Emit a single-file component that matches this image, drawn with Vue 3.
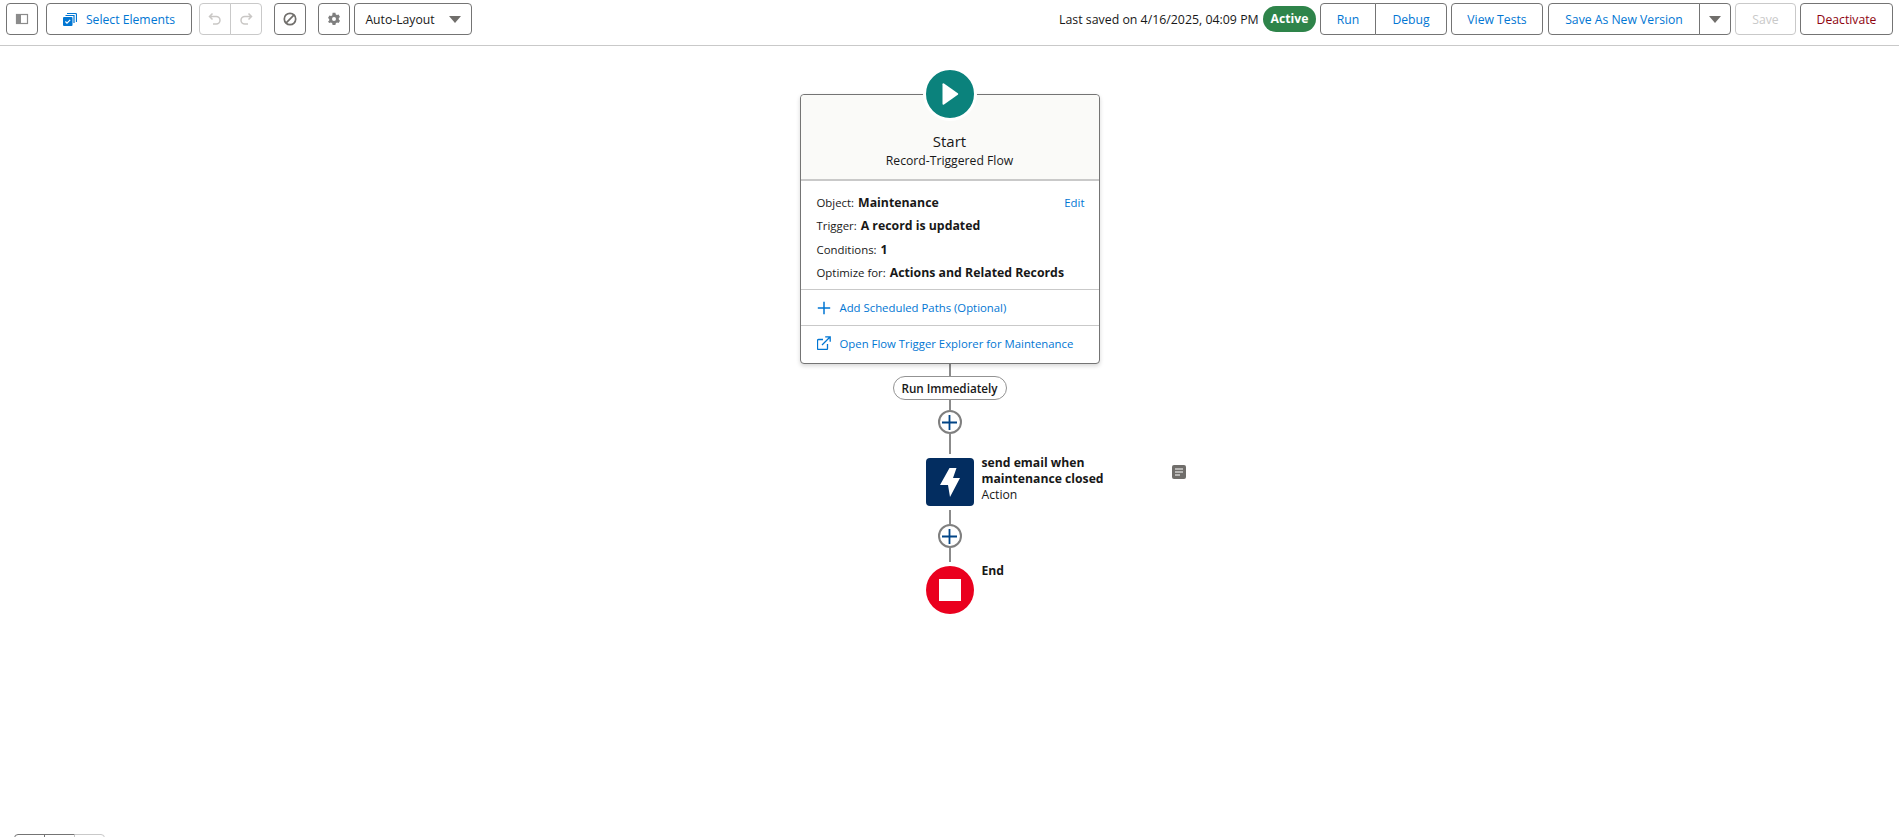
<template>
  <div class="builder">
    <header class="toolbar">
      <div class="tools">
        <button class="btn icon-btn panel-btn" title="Toggle Panel">
          <svg width="14" height="14" viewBox="0 0 14 14">
            <rect x="1.500" y="2.500" width="11" height="9" fill="none" stroke="#8b8b8b" stroke-width="1.200" />
            <rect x="1.500" y="2.500" width="4.500" height="9" fill="#8b8b8b" />
          </svg>
        </button>
        <button class="btn select-btn">
          <svg width="14" height="14" viewBox="0 0 14 14">
            <path d="M4 1.500h8.500a1 1 0 0 1 1 1V10" fill="none" stroke="#0176d3" stroke-width="1.200" />
            <path d="M2.500 3.500h8.500V11" fill="none" stroke="#0176d3" stroke-width="1.200" />
            <rect x="0" y="5" width="9.500" height="9" rx="1" fill="#0176d3" />
            <path d="M2.400 9.500l1.600 1.600 3.200-3.200" fill="none" stroke="#fff" stroke-width="1.200" />
          </svg>
          <span>Select Elements</span>
        </button>
        <div class="group undo-group">
          <button class="btn icon-btn disabled" title="Undo">
            <svg width="14" height="14" viewBox="0 0 14 14">
              <path d="M4.500 1.500L1.500 4.500l3 3M1.800 4.500h6.400a3.800 3.800 0 0 1 0 7.600H5" fill="none" stroke="#c9c7c5" stroke-width="1.500" />
            </svg>
          </button>
          <button class="btn icon-btn disabled" title="Redo">
            <svg width="14" height="14" viewBox="0 0 14 14">
              <path d="M9.500 1.500l3 3-3 3M12.200 4.500H5.800a3.800 3.800 0 0 0 0 7.600H9" fill="none" stroke="#c9c7c5" stroke-width="1.500" />
            </svg>
          </button>
        </div>
        <button class="btn icon-btn ban-btn" title="Errors">
          <svg width="14" height="14" viewBox="0 0 14 14">
            <circle cx="7" cy="7" r="5.700" fill="none" stroke="#706e6b" stroke-width="1.700" />
            <path d="M3.200 10.800l7.600-7.600" stroke="#706e6b" stroke-width="1.700" />
          </svg>
        </button>
        <button class="btn icon-btn gear-btn" title="Settings">
          <svg width="14" height="14" viewBox="0 0 14 14">
            <path fill-rule="evenodd" fill="#7f7f7f" d="M5.600.8h2.800l.4 1.600 1.200.7 1.600-.5 1.400 2.400-1.200 1.100v1.500l1.200 1.100-1.400 2.400-1.600-.5-1.200.7-.4 1.600H5.600l-.4-1.600-1.200-.7-1.600.5L1 9.700l1.200-1.100V7.100L1 6l1.400-2.400 1.600.5 1.200-.7zM7 5a2 2 0 1 0 0 4 2 2 0 0 0 0-4z" />
          </svg>
        </button>
        <button class="btn layout-btn">
          <span>Auto-Layout</span>
          <i class="caret"></i>
        </button>
      </div>

      <div class="actions">
        <span class="saved">Last saved on 4/16/2025, 04:09 PM</span>
        <span class="badge">Active</span>
        <div class="group run-group">
          <button class="btn run">Run</button>
          <button class="btn debug">Debug</button>
        </div>
        <button class="btn tests">View Tests</button>
        <div class="group save-group">
          <button class="btn save-as">Save As New Version</button>
          <button class="btn more"><i class="caret"></i></button>
        </div>
        <button class="btn save disabled">Save</button>
        <button class="btn deactivate">Deactivate</button>
      </div>
    </header>

    <main class="canvas">
      <section class="start-card">
        <div class="start-icon">
          <svg width="18" height="24" viewBox="0 0 18 24">
            <path d="M1.500 2.300v19.400a1 1 0 0 0 1.500.8l13.800-9.700a1 1 0 0 0 0-1.600L3 1.500a1 1 0 0 0-1.500.8z" fill="#fff" />
          </svg>
        </div>
        <div class="card-head">
          <div class="card-title">Start</div>
          <div class="card-sub">Record-Triggered Flow</div>
        </div>
        <div class="card-body">
          <a class="edit">Edit</a>
          <div v-for="row in details" :key="row.label" class="detail">
            <span>{{ row.label }}:</span> <b>{{ row.value }}</b>
          </div>
        </div>
        <a class="card-link">
          <svg width="14" height="14" viewBox="0 0 14 14">
            <path d="M7 .8v12.400M.8 7h12.400" stroke="#0176d3" stroke-width="1.500" />
          </svg>
          Add Scheduled Paths (Optional)
        </a>
        <a class="card-link">
          <svg width="14" height="14" viewBox="0 0 14 14">
            <path d="M10.500 8v4.500a1 1 0 0 1-1 1H1.500a1 1 0 0 1-1-1V4.500a1 1 0 0 1 1-1H6" fill="none" stroke="#0176d3" stroke-width="1.300" />
            <path d="M5 9l7.500-7.500M8.200.8h5v5" fill="none" stroke="#0176d3" stroke-width="1.300" />
          </svg>
          Open Flow Trigger Explorer for Maintenance
        </a>
      </section>

      <div class="line first"></div>
      <div class="pill">Run Immediately</div>
      <div class="line short"></div>
      <button class="add"><svg width="15" height="15" viewBox="0 0 15 15"><path d="M7.500 0v15M0 7.500h15" stroke="#014486" stroke-width="1.800" /></svg></button>
      <div class="line mid"></div>

      <div class="node action">
        <svg width="20" height="29" viewBox="0 0 20 29">
          <path d="M9.500 0H16.500L13 10H20L10 29L8 17H0Z" fill="#fff" />
        </svg>
        <div class="node-label">
          <b>send email when<br />maintenance closed</b>
          <span>Action</span>
        </div>
        <svg class="note" width="14" height="14" viewBox="0 0 14 14">
          <rect width="14" height="14" rx="2" fill="#706e6b" />
          <path d="M3 4h8M3 7h8M3 10h5" stroke="#fff" stroke-width="1.200" />
        </svg>
      </div>

      <div class="line after"></div>
      <button class="add"><svg width="15" height="15" viewBox="0 0 15 15"><path d="M7.500 0v15M0 7.500h15" stroke="#014486" stroke-width="1.800" /></svg></button>
      <div class="line end-line"></div>

      <div class="node end">
        <i class="stop"></i>
        <div class="node-label"><b>End</b></div>
      </div>
    </main>

    <div class="zoom-group">
      <i></i><i></i><i class="off"></i>
    </div>
  </div>
</template>

<script setup>
const details = [
  { label: 'Object', value: 'Maintenance' },
  { label: 'Trigger', value: 'A record is updated' },
  { label: 'Conditions', value: '1' },
  { label: 'Optimize for', value: 'Actions and Related Records' }
]
</script>

<style>
html,
body {
  margin: 0;
  background: #fff;
  overflow: hidden;
}
</style>

<style scoped>
.builder {
  position: relative;
  width: 1899px;
  height: 837px;
  overflow: hidden;
  font-family: 'Open Sans', 'Noto Sans', sans-serif;
  font-size: 12.200px;
  color: #181818;
}

/* toolbar */
.toolbar {
  display: flex;
  justify-content: space-between;
  align-items: center;
  box-sizing: border-box;
  height: 46px;
  padding: 0 6px 7px;
  border-bottom: 1px solid #c9c9c9;
}
.tools,
.actions,
.group {
  display: flex;
  align-items: center;
}
.btn {
  box-sizing: border-box;
  display: flex;
  align-items: center;
  justify-content: center;
  height: 32px;
  padding: 0;
  border: 1px solid #747474;
  border-radius: 4px;
  background: #fff;
  color: #0176d3;
  font: inherit;
}
.icon-btn {
  width: 32px;
}
.select-btn {
  width: 146px;
  margin-left: 8px;
  gap: 9px;
}
.undo-group {
  margin-left: 7px;
}
.ban-btn {
  margin-left: 12px;
}
.gear-btn {
  margin-left: 12px;
}
.layout-btn {
  width: 118px;
  margin-left: 4px;
  gap: 14px;
  color: #181818;
}
.caret {
  display: block;
  width: 0;
  height: 0;
  border-left: 6px solid transparent;
  border-right: 6px solid transparent;
  border-top: 7px solid #706e6b;
}
.group .btn:first-child {
  border-radius: 4px 0 0 4px;
}
.group .btn:last-child {
  margin-left: -1px;
  border-radius: 0 4px 4px 0;
}
.btn.disabled {
  border-color: #c9c9c9;
  color: #c9c9c9;
}
.saved {
  width: 204px;
  font-size: 12.350px;
  white-space: nowrap;
}
.badge {
  box-sizing: border-box;
  width: 53px;
  height: 26px;
  line-height: 25px;
  border-radius: 13px;
  background: #2e844a;
  color: #fff;
  font-weight: 700;
  text-align: center;
}
.run-group {
  margin-left: 4px;
}
.run {
  width: 56px;
}
.debug {
  width: 72px;
}
.tests {
  width: 92px;
  margin-left: 4px;
}
.save-group {
  margin-left: 5px;
}
.save-as {
  width: 152px;
}
.more {
  width: 32px;
}
.save {
  width: 61px;
  margin-left: 4px;
}
.deactivate {
  width: 93px;
  margin-left: 4px;
  color: #8e030f;
}

/* canvas */
.canvas {
  display: flex;
  flex-direction: column;
  align-items: center;
  padding-top: 48px;
}
.start-card {
  position: relative;
  box-sizing: border-box;
  width: 300px;
  height: 270px;
  border: 1px solid #747474;
  border-radius: 4px;
  box-shadow: 0 2px 4px rgba(0, 0, 0, 0.16);
  background: #fff;
}
.start-icon {
  position: absolute;
  top: -28px;
  left: 50%;
  box-sizing: content-box;
  display: flex;
  align-items: center;
  justify-content: center;
  width: 48px;
  height: 48px;
  margin-left: -27px;
  border: 3px solid #fff;
  border-radius: 50%;
  background: #0b827c;
}
.card-head {
  box-sizing: border-box;
  height: 86px;
  padding-top: 36px;
  border-bottom: 2px solid #c9c9c9;
  border-radius: 4px 4px 0 0;
  background: #fafaf8;
  text-align: center;
}
.card-title {
  font-size: 15px;
  line-height: 20px;
}
.card-sub {
  line-height: 20px;
}
.card-body {
  position: relative;
  box-sizing: border-box;
  height: 109px;
  padding: 10px 16px 0;
  border-bottom: 1px solid #c9c9c9;
  font-size: 11.400px;
}
.edit {
  position: absolute;
  top: 10px;
  right: 14px;
  line-height: 23px;
  color: #0176d3;
}
.detail {
  line-height: 23.300px;
  white-space: nowrap;
}
.detail b {
  margin-left: 1px;
  font-size: 12.300px;
}
.card-link {
  display: flex;
  align-items: center;
  gap: 9px;
  box-sizing: border-box;
  height: 35px;
  padding-left: 16px;
  font-size: 11.350px;
  color: #0176d3;
  white-space: nowrap;
}
.card-link + .card-link {
  border-top: 1px solid #c9c9c9;
}
.line {
  width: 2px;
  background: #8b8b8b;
}
.line.first {
  height: 12px;
}
.line.short {
  height: 10px;
}
.line.mid {
  height: 20px;
}
.line.after {
  height: 14px;
  margin-top: 4px;
}
.line.end-line {
  height: 14px;
}
.pill {
  box-sizing: border-box;
  width: 114px;
  height: 24px;
  line-height: 22px;
  border: 1px solid #939393;
  border-radius: 12px;
  background: #fff;
  font-size: 11.700px;
  font-weight: 600;
  text-align: center;
  white-space: nowrap;
}
.add {
  box-sizing: border-box;
  display: flex;
  align-items: center;
  justify-content: center;
  width: 24px;
  height: 24px;
  padding: 0;
  border: 2px solid #7f7f7f;
  border-radius: 50%;
  background: #fff;
}
.node {
  position: relative;
  display: flex;
  align-items: center;
  justify-content: center;
  width: 48px;
  height: 48px;
  margin-top: 4px;
}
.action {
  border-radius: 4px;
  background: #032d60;
}
.end {
  border-radius: 50%;
  background: #ea001e;
}
.stop {
  display: block;
  width: 22px;
  height: 22px;
  background: #fff;
}
.node-label {
  position: absolute;
  top: -3px;
  left: 56px;
  width: 200px;
  line-height: 16px;
}
.node-label b,
.node-label span {
  display: block;
}
.note {
  position: absolute;
  top: 7px;
  left: 246px;
}
.zoom-group {
  position: absolute;
  left: 14px;
  top: 834px;
  display: flex;
}
.zoom-group i {
  box-sizing: border-box;
  display: block;
  width: 31px;
  height: 32px;
  border: 1px solid #747474;
  border-radius: 4px 0 0 4px;
}
.zoom-group i + i {
  margin-left: -1px;
  border-radius: 0;
}
.zoom-group i.off {
  border-color: #c9c9c9;
  border-radius: 0 4px 4px 0;
}
</style>
